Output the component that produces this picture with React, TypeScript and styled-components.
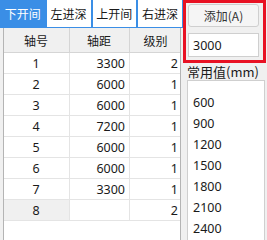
import React from 'react';
import styled, { createGlobalStyle } from 'styled-components';

const Global = createGlobalStyle`
  html, body { margin: 0; padding: 0; background: #f0f0f0; }
  body {
    font-family: "Segoe UI", "Noto Sans", "Noto Sans CJK SC", sans-serif;
    font-size: 12px;
    color: #1a1a1a;
  }
  * { box-sizing: border-box; }
`;

const Page = styled.div`
  display: flex;
  width: 267px;
  height: 240px;
  overflow: hidden;
`;

const Left = styled.div`
  width: 183px;
  display: flex;
  flex-direction: column;
`;

const Tabs = styled.div`
  display: flex;
  height: 28px;
`;

const Tab = styled.div<{ $active?: boolean }>`
  width: 46px;
  height: 28px;
  display: flex;
  align-items: center;
  justify-content: center;
  border: 1px solid #3a8ee6;
  border-top: none;
  background: ${(p) => (p.$active ? '#3a8ee6' : '#ffffff')};
  color: ${(p) => (p.$active ? '#ffffff' : '#1a1a1a')};
  font-family: "Noto Sans CJK SC", sans-serif;
  font-size: 12px;
  white-space: nowrap;
`;

const Table = styled.div`
  flex: 1;
  margin-left: 3px;
  width: 178px;
  background: #ffffff;
  border-left: 1px solid #b4b4b4;
  border-right: 1px solid #b4b4b4;
`;

const Row = styled.div<{ $head?: boolean }>`
  display: grid;
  grid-template-columns: 66px 60px 1fr;
  height: ${(p) => (p.$head ? '25px' : '21px')};
  border-bottom: 1px solid ${(p) => (p.$head ? '#d5d5d5' : '#e4e4e4')};
  background: ${(p) => (p.$head ? '#f0f0f0' : '#ffffff')};
`;

const Cell = styled.div<{ $align?: 'left' | 'center' | 'right'; $gray?: boolean; $head?: boolean }>`
  display: flex;
  align-items: center;
  justify-content: ${(p) =>
    p.$align === 'right' ? 'flex-end' : p.$align === 'left' ? 'flex-start' : 'center'};
  padding: 0 4px 0 3px;
  border-right: 1px solid ${(p) => (p.$head ? '#d5d5d5' : '#e4e4e4')};
  background: ${(p) => (p.$gray ? '#f0f0f0' : 'transparent')};
  font-family: ${(p) => (p.$head ? '"Noto Sans CJK SC", sans-serif' : 'inherit')};
  font-size: ${(p) => (p.$head ? '12px' : '12.5px')};
  &:last-child { border-right: none; padding-right: 2px; }
`;

const Right = styled.div`
  width: 84px;
  display: flex;
  flex-direction: column;
`;

const Highlight = styled.div`
  width: 83px;
  height: 63px;
  border: 3px solid #e81123;
  padding: 1px 4px 3px 2px;
  display: flex;
  flex-direction: column;
  gap: 6px;
`;

const Button = styled.div`
  height: 23px;
  border: 1px solid #cfcfcf;
  border-radius: 3px;
  background: #f5f5f5;
  display: flex;
  align-items: center;
  justify-content: center;
  font-family: "Noto Sans CJK SC", sans-serif;
  font-size: 12px;
  color: #333;
`;

const Input = styled.div`
  height: 24px;
  border: 1px solid #cfcfcf;
  background: #ffffff;
  display: flex;
  align-items: center;
  padding-left: 4px;
  font-size: 12.5px;
`;

const Label = styled.div`
  margin: 1px 0 0 4px;
  height: 16px;
  line-height: 16px;
  font-family: "Noto Sans CJK SC", sans-serif;
  font-size: 13px;
  white-space: nowrap;
`;

const List = styled.div`
  margin: 0 2px 0 4px;
  flex: 1;
  background: #ffffff;
  border: 1px solid #cfcfcf;
  border-bottom: none;
  padding-top: 11px;
`;

const Item = styled.div`
  height: 21px;
  line-height: 21px;
  padding-left: 5px;
  font-size: 12.5px;
`;

const rows: [string, string, string][] = [
  ['1', '3300', '2'],
  ['2', '6000', '1'],
  ['3', '6000', '1'],
  ['4', '7200', '1'],
  ['5', '6000', '1'],
  ['6', '6000', '1'],
  ['7', '3300', '1'],
  ['8', '', '2'],
];

const values = ['600', '900', '1200', '1500', '1800', '2100', '2400'];

export default function App() {
  return (
    <Page>
      <Global />
      <Left>
        <Tabs>
          <Tab $active>下开间</Tab>
          <Tab>左进深</Tab>
          <Tab>上开间</Tab>
          <Tab>右进深</Tab>
        </Tabs>
        <Table>
          <Row $head>
            <Cell $head>轴号</Cell>
            <Cell $head>轴距</Cell>
            <Cell $head>级别</Cell>
          </Row>
          {rows.map((r, i) => (
            <Row key={i}>
              <Cell $gray={i === rows.length - 1}>{r[0]}</Cell>
              <Cell $align="right">{r[1]}</Cell>
              <Cell $align="right">{r[2]}</Cell>
            </Row>
          ))}
        </Table>
      </Left>
      <Right>
        <Highlight>
          <Button>添加(A)</Button>
          <Input>3000</Input>
        </Highlight>
        <Label>常用值(mm)</Label>
        <List>
          {values.map((v) => (
            <Item key={v}>{v}</Item>
          ))}
        </List>
      </Right>
    </Page>
  );
}
